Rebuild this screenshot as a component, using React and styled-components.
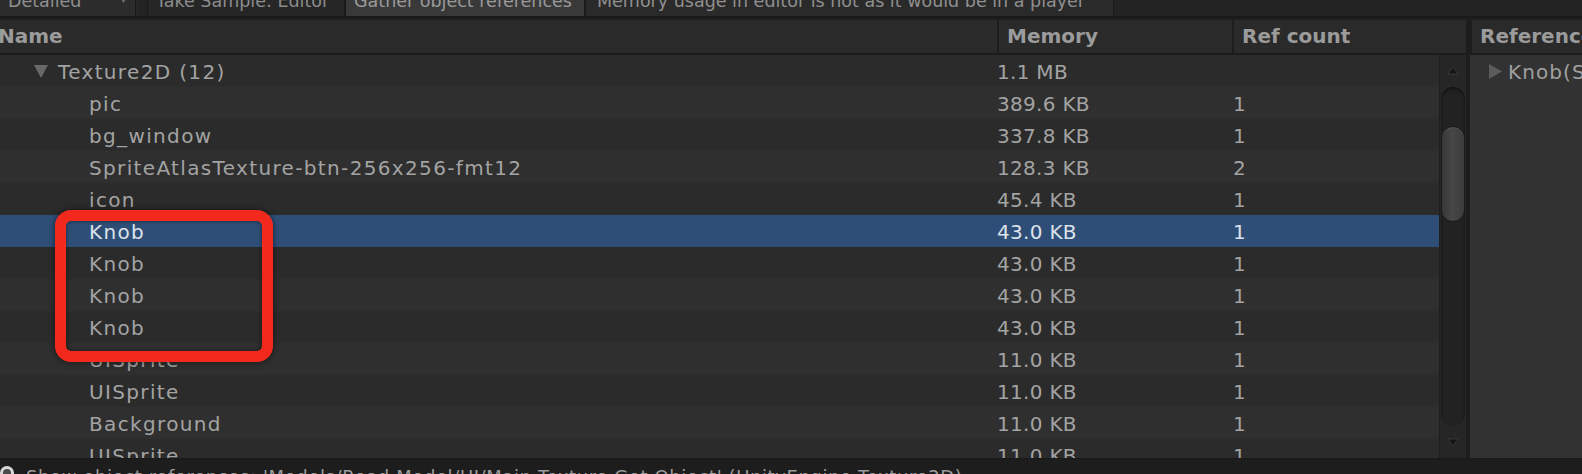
import React from 'react';
import styled, {createGlobalStyle, css} from 'styled-components';

const rows = [
    {name: 'Texture2D (12)', memory: '1.1 MB', refs: '', group: true},
    {name: 'pic', memory: '389.6 KB', refs: '1'},
    {name: 'bg_window', memory: '337.8 KB', refs: '1'},
    {name: 'SpriteAtlasTexture-btn-256x256-fmt12', memory: '128.3 KB', refs: '2'},
    {name: 'icon', memory: '45.4 KB', refs: '1'},
    {name: 'Knob', memory: '43.0 KB', refs: '1', selected: true},
    {name: 'Knob', memory: '43.0 KB', refs: '1'},
    {name: 'Knob', memory: '43.0 KB', refs: '1'},
    {name: 'Knob', memory: '43.0 KB', refs: '1'},
    {name: 'UISprite', memory: '11.0 KB', refs: '1'},
    {name: 'UISprite', memory: '11.0 KB', refs: '1'},
    {name: 'Background', memory: '11.0 KB', refs: '1'},
    {name: 'UISprite', memory: '11.0 KB', refs: '1'},
];

export default function App() {
    return (
        <>
            <GlobalStyle />
            <Window>
                <Toolbar>
                    <Dropdown>
                        <span>Detailed</span>
                        <DropArrow>▼</DropArrow>
                    </Dropdown>
                    <ToolButton>Take Sample: Editor</ToolButton>
                    <ToolButton active>Gather object references</ToolButton>
                    <Notice>Memory usage in editor is not as it would be in a player</Notice>
                </Toolbar>

                <Main>
                    <ListPane>
                        <HeaderRow>
                            <HeaderCell first>Name</HeaderCell>
                            <HeaderCell>Memory</HeaderCell>
                            <HeaderCell>Ref count</HeaderCell>
                        </HeaderRow>
                        <ListBody>
                            <Rows>
                                {rows.map((row, i) => (
                                    <Row key={i} odd={i % 2 === 1} selected={row.selected}>
                                        <NameCell group={row.group}>
                                            {row.group && <Triangle dir='down' />}
                                            {row.name}
                                        </NameCell>
                                        <NumCell>{row.memory}</NumCell>
                                        <NumCell>{row.refs}</NumCell>
                                    </Row>
                                ))}
                            </Rows>
                            <Scrollbar>
                                <ScrollArrow><ArrowGlyph /></ScrollArrow>
                                <Track>
                                    <Thumb />
                                </Track>
                                <ScrollArrow><ArrowGlyph down /></ScrollArrow>
                            </Scrollbar>
                        </ListBody>
                    </ListPane>

                    <RefPane>
                        <HeaderRow>
                            <HeaderCell>References</HeaderCell>
                        </HeaderRow>
                        <RefItem>
                            <Triangle dir='right' />
                            Knob(Sprite)
                        </RefItem>
                    </RefPane>
                </Main>

                <StatusBar>
                    <InfoIcon />
                    <StatusText>Show object references: 'Models/Read Model/UI/Main Texture Got Object' (UnityEngine.Texture2D)</StatusText>
                </StatusBar>

                <Highlight />
            </Window>
        </>
    );
}

const Triangle = ({dir}) => (
    <TriangleSvg width='15' height='15' viewBox='0 0 15 15'>
        {dir === 'down'
            ? <polygon points='0,1 14,1 7,14' fill='#686868' />
            : <polygon points='1,0 14,7.5 1,15' fill='#5c5c5c' />}
    </TriangleSvg>
);

const ArrowGlyph = ({down = false}) => (
    <svg width='12' height='10' viewBox='0 0 12 10'>
        {down
            ? <polygon points='1,2 11,2 6,9' fill='#151515' stroke='#4a4a4a' strokeWidth='0.6' />
            : <polygon points='6,1 11,8 1,8' fill='#151515' stroke='#4a4a4a' strokeWidth='0.6' />}
    </svg>
);

const InfoIcon = () => (
    <IconSvg width='16' height='16' viewBox='0 0 16 16'>
        <circle cx='7' cy='8' r='7' fill='#d8d8d8' />
        <circle cx='7' cy='8' r='4' fill='#4a4a4a' />
    </IconSvg>
);

const GlobalStyle = createGlobalStyle`
    html, body {
        margin: 0;
        padding: 0;
        background: #2b2b2b;
        overflow: hidden;
    }
    * {
        box-sizing: border-box;
    }
`;

const Window = styled.div`
    position: relative;
    width: 1582px;
    height: 474px;
    display: flex;
    flex-direction: column;
    overflow: hidden;
    font-family: "DejaVu Sans", "Noto Sans", sans-serif;
    color: #a6a6a6;
`;

const Toolbar = styled.div`
    height: 18px;
    flex: none;
    display: flex;
    overflow: hidden;
    background: #232323;
    border-bottom: 2px solid #1a1a1a;
    font-size: 17.5px;
    color: #8f8f8f;
`;

const toolItem = css`
    height: 28px;
    margin-top: -12px;
    line-height: 26px;
    white-space: nowrap;
`;

const Dropdown = styled.div`
    ${toolItem};
    width: 136px;
    padding: 0 8px;
    display: flex;
    justify-content: space-between;
    background: #2c2c2c;
    border-right: 1px solid #191919;
    margin-right: 11px;
    box-shadow: 2px 0 0 #262626;
`;

const DropArrow = styled.span`
    font-size: 9px;
    color: #7a7a7a;
    line-height: 22px;
`;

const ToolButton = styled.div`
    ${toolItem};
    padding: 0 8px;
    background: ${props => props.active ? '#393939' : '#262626'};
    color: ${props => props.active ? '#9a9a9a' : '#8c8c8c'};
    border-left: 1px solid #191919;
    border-right: 1px solid #191919;
    min-width: ${props => props.active ? '240px' : '198px'};
`;

const Notice = styled.div`
    ${toolItem};
    padding: 0 10px 0 11px;
    width: 529px;
    background: #2a2a2a;
    border-left: 1px solid #1b1b1b;
    border-right: 1px solid #1b1b1b;
`;

const Main = styled.div`
    flex: 1;
    min-height: 0;
    display: flex;
`;

const ListPane = styled.div`
    width: 1466px;
    flex: none;
    display: flex;
    flex-direction: column;
    border-right: 4px solid #1c1c1c;
    box-sizing: content-box;
`;

const HeaderRow = styled.div`
    height: 37px;
    flex: none;
    display: flex;
    background: #2a2a2a;
    border-top: 2px solid #1f1f1f;
    border-bottom: 2px solid #1b1b1b;
`;

const HeaderCell = styled.div`
    height: 33px;
    line-height: 33px;
    font-size: 20px;
    font-weight: bold;
    color: #9b9b9b;
    white-space: nowrap;
    overflow: hidden;
    padding-left: ${props => props.first ? '0' : '8px'};
    text-indent: ${props => props.first ? '-2px' : '0'};
    border-left: ${props => props.first ? 'none' : '2px solid #1d1d1d'};
    &:nth-child(1) { width: ${props => props.first ? '997px' : 'auto'}; }
    &:nth-child(2) { width: 235px; }
    &:nth-child(3) { flex: 1; }
`;

const ListBody = styled.div`
    flex: 1;
    min-height: 0;
    display: flex;
`;

const Rows = styled.div`
    width: 1439px;
    flex: none;
    overflow: hidden;
`;

const Row = styled.div`
    height: 32px;
    display: grid;
    grid-template-columns: 997px 236px 1fr;
    line-height: 34px;
    font-size: 20px;
    overflow: hidden;
    white-space: nowrap;
    background: ${props => props.selected ? '#2f4e77' : props.odd ? '#2f2f2f' : '#2b2b2b'};
    color: ${props => props.selected ? '#dce2ea' : '#a3a3a3'};
`;

const NameCell = styled.div`
    display: flex;
    align-items: flex-start;
    letter-spacing: 1.35px;
    padding-left: ${props => props.group ? '34px' : '89px'};
`;

const TriangleSvg = styled.svg`
    flex: none;
    margin: 9px 9px 0 0;
`;

const NumCell = styled.div`
    letter-spacing: 0.3px;
`;

const Scrollbar = styled.div`
    width: 27px;
    flex: none;
    display: flex;
    flex-direction: column;
    background: #262626;
    border-left: 1px solid #1e1e1e;
`;

const ScrollArrow = styled.div`
    height: 32px;
    flex: none;
    display: flex;
    align-items: center;
    justify-content: center;
`;

const Track = styled.div`
    flex: 1;
    margin: 0 1px;
    border-radius: 13px;
    background: #222222;
    box-shadow: inset 0 2px 3px rgba(0, 0, 0, 0.45);
    overflow: hidden;
`;

const Thumb = styled.div`
    margin-top: 39px;
    height: 96px;
    border-radius: 13px;
    border: 1px solid #1c1c1c;
    background: linear-gradient(to right, #373737, #474747 45%, #3c3c3c);
    box-shadow: inset 0 1px 0 #555;
`;

const RefPane = styled.div`
    flex: 1;
    min-width: 0;
    display: flex;
    flex-direction: column;
    background: #323232;
`;

const RefItem = styled.div`
    height: 32px;
    display: flex;
    align-items: flex-start;
    padding-left: 18px;
    line-height: 34px;
    font-size: 20px;
    letter-spacing: 1.1px;
    color: #a0a0a0;
    white-space: nowrap;

    svg {
        margin: 9px 5px 0 0;
    }
`;

const StatusBar = styled.div`
    height: 16px;
    flex: none;
    display: flex;
    overflow: hidden;
    background: #1d1d1d;
    border-top: 1px solid #191919;
    padding-top: 9px;
    font-size: 18px;
    color: #9c9c9c;
`;

const IconSvg = styled.svg`
    flex: none;
    margin: -3px 10px 0 0;
`;

const StatusText = styled.div`
    line-height: 18px;
    white-space: nowrap;
    letter-spacing: 0.6px;
`;

const Highlight = styled.div`
    position: absolute;
    left: 55px;
    top: 210px;
    width: 218px;
    height: 152px;
    border: 11px solid #f3291d;
    border-radius: 16px;
    box-shadow: 0 0 6px rgba(0, 0, 0, 0.55), inset 0 0 4px rgba(0, 0, 0, 0.5);
    pointer-events: none;
`;
